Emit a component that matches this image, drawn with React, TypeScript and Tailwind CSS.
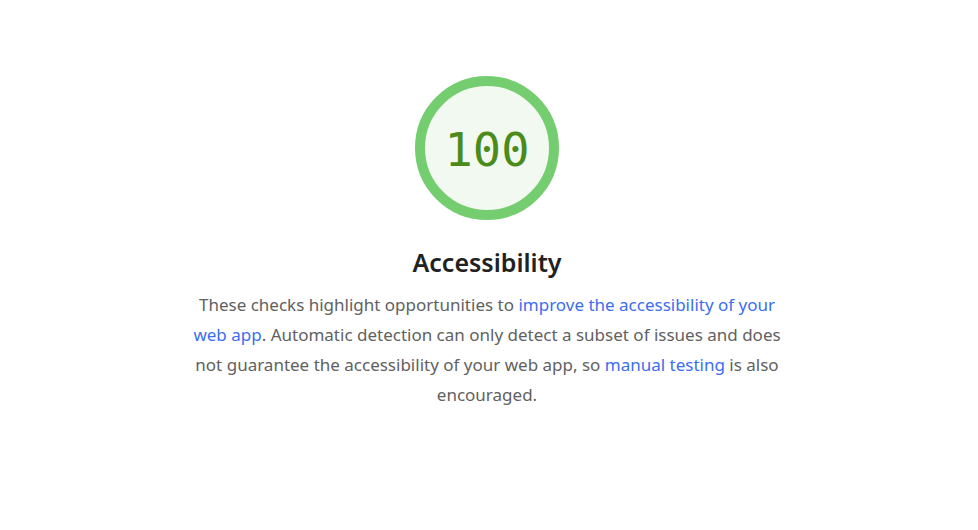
import React from 'react';

const Gauge = ({ score }: { score: number }) => {
  return (
    <div className="relative w-[144px] h-[144px]">
      <svg viewBox="0 0 144 144" className="absolute inset-0 w-full h-full">
        <circle cx="72" cy="72" r="67" fill="#f2f9f0" stroke="#74cd6e" strokeWidth="10" />
      </svg>
      <div className="absolute inset-0 flex items-center justify-center pt-[2px] text-[47px] leading-none text-[#4b8b19] [font-family:'DejaVu_Sans_Mono',monospace]">
        {score}
      </div>
    </div>
  );
};

export default function App() {
  return (
    <div className="min-h-screen bg-white flex flex-col items-center pt-[76px] pr-[4px] [font-family:'Noto_Sans','Open_Sans',sans-serif]">
      <Gauge score={100} />
      <h2 className="mt-[26px] text-[25px] leading-[32px] font-semibold text-[#212121]">Accessibility</h2>
      <p className="mt-[12px] w-[596px] text-center text-[17px] leading-[30px] text-[#616161]">
        These checks highlight opportunities to{' '}
        <a href="#" className="text-[#3b6ef0]">improve the accessibility of your web app</a>. Automatic detection can only detect a
        subset of issues and does not guarantee the accessibility of your web app, so{' '}
        <a href="#" className="text-[#3b6ef0]">manual testing</a> is also encouraged.
      </p>
    </div>
  );
}
